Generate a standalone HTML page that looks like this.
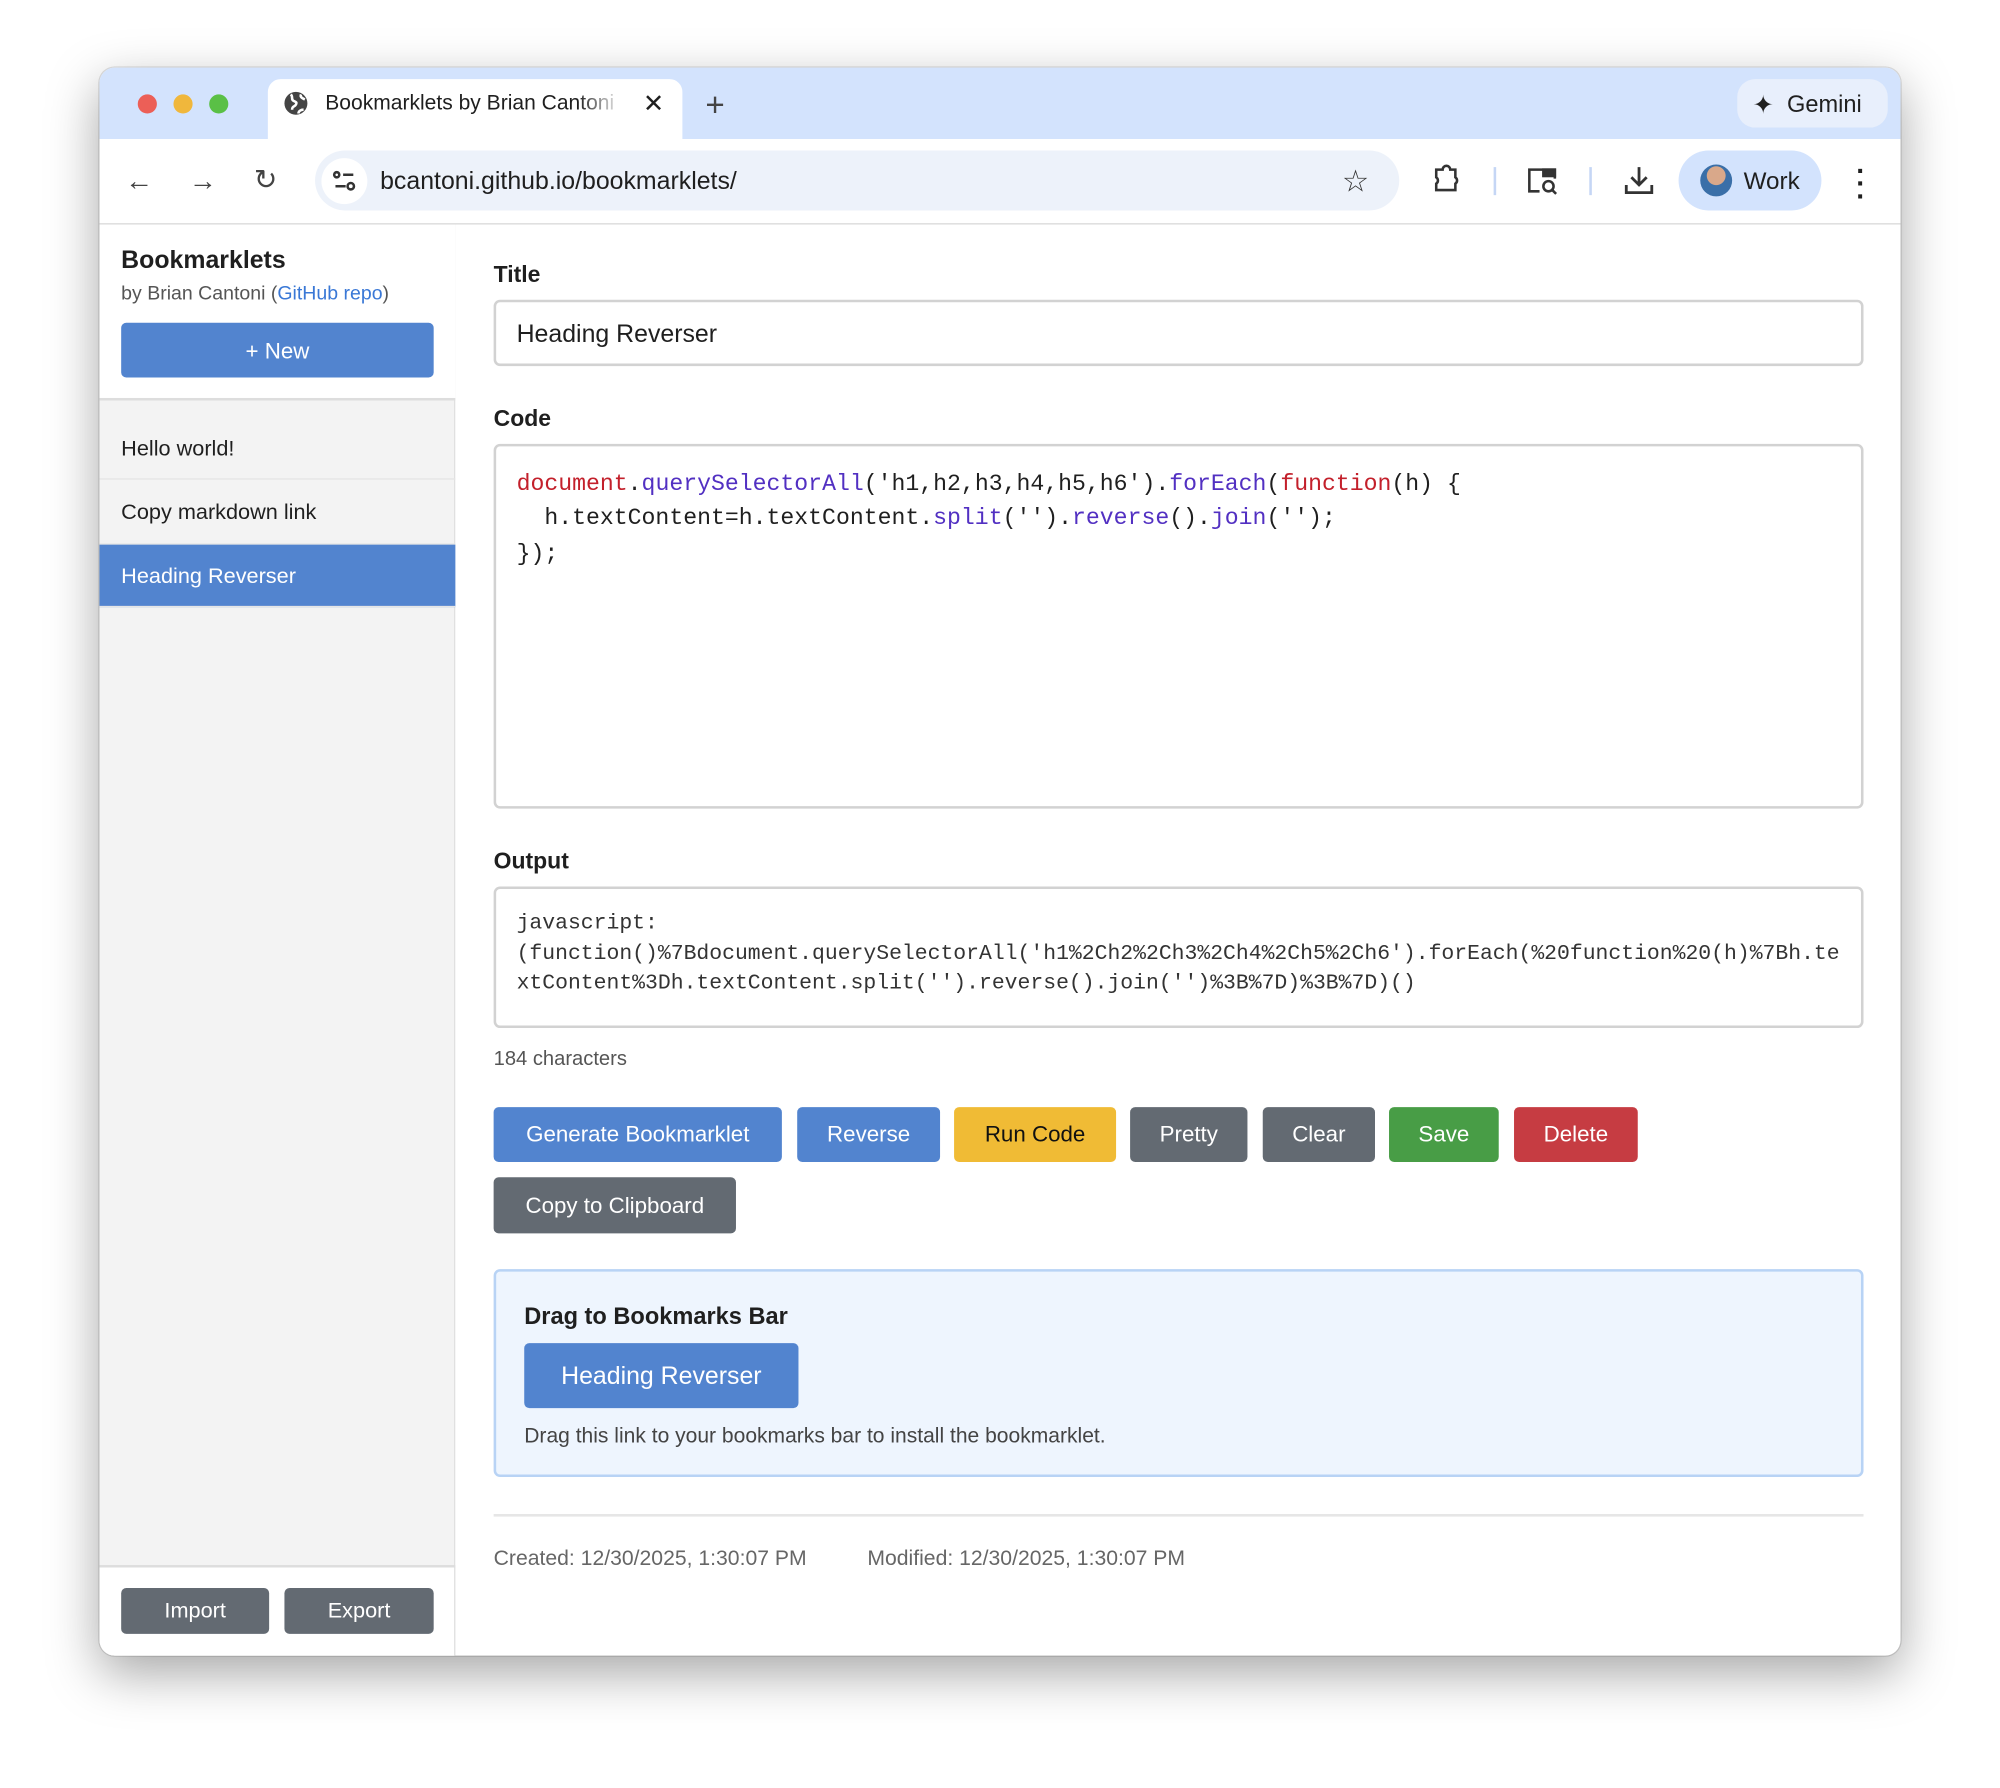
<!DOCTYPE html>
<html><head><meta charset="utf-8"><style>
*{box-sizing:border-box;margin:0;padding:0}
html,body{width:2000px;height:1788px;overflow:hidden;background:#fff}
#s{position:absolute;left:0;top:0;width:1568px;height:1402px;transform:scale(1.27551);transform-origin:0 0;font-family:"Liberation Sans",sans-serif;color:#1f1f1f}
.a{position:absolute}
.win{left:78px;top:53px;width:1412px;height:1245px;border-radius:12px;overflow:hidden;background:#fff;box-shadow:0 14px 40px rgba(0,0,0,.35),0 0 0 1px rgba(0,0,0,.12)}
.dot{width:15px;height:15px;border-radius:50%;top:74px}
.btn{position:absolute;color:#fff;font-size:17.5px;display:flex;align-items:center;justify-content:center;border-radius:4px;height:43px}
.mono{font-family:"Liberation Mono",monospace;white-space:pre}
.lbl{font-weight:bold;font-size:18px;left:387px}
.item{left:78px;width:279px;height:50px;font-size:17px;padding-left:17px;padding-top:2px;display:flex;align-items:center;border-bottom:1px solid #e5e5e5}
</style></head><body><div id="s">
<div class="a win"></div>
<div class="a" style="left:78px;top:53px;width:1412px;height:56px;background:#d3e3fd;border-radius:12px 12px 0 0"></div>
<div class="a dot" style="left:108px;background:#ec5f57"></div>
<div class="a dot" style="left:136px;background:#f0b73c"></div>
<div class="a dot" style="left:164px;background:#5ac046"></div>
<div class="a" style="left:210px;top:62px;width:325px;height:50px;background:#fff;border-radius:10px 10px 0 0"></div>
<svg class="a" style="left:222px;top:71px" width="20" height="20" viewBox="0 0 20 20"><circle cx="10" cy="10" r="9" fill="#444"/><path d="M6 3c2 2 0 4 2 5s3 1 2 3-3 1-3 4M14 3c-1 2 1 3 3 4M12 18c0-2 2-3 4-3" stroke="#fff" stroke-width="2" fill="none"/></svg>
<div class="a" style="left:255px;top:72px;font-size:16.5px;width:233px;overflow:hidden;white-space:nowrap;-webkit-mask-image:linear-gradient(90deg,#000 85%,transparent)">Bookmarklets by Brian Cantoni</div>
<div class="a" style="left:504px;top:69px;font-size:20px">✕</div>
<div class="a" style="left:553px;top:67px;font-size:26px;color:#444">+</div>
<div class="a" style="left:1362px;top:62px;width:118px;height:38px;border-radius:14px;background:#e8effc"></div>
<div class="a" style="left:1374px;top:70px;font-size:20px">✦</div>
<div class="a" style="left:1401px;top:71px;font-size:18.5px">Gemini</div>
<div class="a" style="left:98px;top:129px;font-size:22px;color:#444">←</div>
<div class="a" style="left:148px;top:129px;font-size:22px;color:#444">→</div>
<div class="a" style="left:199px;top:128px;font-size:22px;color:#444">↻</div>
<div class="a" style="left:247px;top:118px;width:850px;height:47px;border-radius:24px;background:#edf2fa"></div>
<div class="a" style="left:252px;top:124px;width:36px;height:36px;border-radius:50%;background:#fff"></div>
<svg class="a" style="left:260px;top:132px" width="20" height="20" viewBox="0 0 20 20" fill="none" stroke="#333" stroke-width="2"><circle cx="4" cy="5" r="2"/><path d="M9 5h8M3 14h8"/><circle cx="15" cy="14" r="2.5"/></svg>
<div class="a" style="left:298px;top:131px;font-size:19.5px">bcantoni.github.io/bookmarklets/</div>
<div class="a" style="left:1052px;top:128px;font-size:24px;color:#333">☆</div>
<svg class="a" style="left:1122px;top:129px" width="24" height="24" viewBox="0 0 24 24" fill="none" stroke="#333" stroke-width="2"><path d="M4 4h5a3 3 0 0 1 6 0h4v6a3 3 0 0 1 0 5v5H4v-5a3 3 0 0 0 0-5z"/></svg>
<div class="a" style="left:1171px;top:131px;width:2px;height:22px;background:#c5d6f5"></div>
<svg class="a" style="left:1197px;top:129px" width="26" height="26" viewBox="0 0 26 26" fill="none" stroke="#333" stroke-width="2"><path d="M10 21H2V4h20v7"/><rect x="13" y="4" width="9" height="5" fill="#333"/><circle cx="17" cy="17" r="4"/><path d="M20 20l3 3"/></svg>
<div class="a" style="left:1246px;top:131px;width:2px;height:22px;background:#c5d6f5"></div>
<svg class="a" style="left:1273px;top:129px" width="24" height="24" viewBox="0 0 24 24" fill="none" stroke="#333" stroke-width="2.2"><path d="M12 2v13M6 10l6 6 6-6M2 16v6h20v-6"/></svg>
<div class="a" style="left:1316px;top:118px;width:112px;height:47px;border-radius:24px;background:#d3e3fd"></div>
<div class="a" style="left:1333px;top:129px;width:25px;height:25px;border-radius:50%;background:radial-gradient(circle at 50% 35%,#d9a88a 35%,#3a6fa8 37%)"></div>
<div class="a" style="left:1367px;top:132px;font-size:19px">Work</div>
<div class="a" style="left:1452px;top:129px;font-size:22px;font-weight:bold;line-height:10px;width:14px;text-align:center">·<br>·<br>·</div>
<div class="a" style="left:78px;top:175px;width:1412px;height:1px;background:#d8d8d8"></div>
<!-- sidebar -->
<div class="a" style="left:78px;top:176px;width:279px;height:1122px;background:#f3f3f3;border-right:1px solid #ddd;border-radius:0 0 0 12px"></div>
<div class="a" style="left:78px;top:176px;width:279px;height:138px;background:#fff;border-bottom:2px solid #ddd"></div>
<div class="a" style="left:95px;top:193px;font-size:19.5px;font-weight:bold">Bookmarklets</div>
<div class="a" style="left:95px;top:222px;font-size:15.3px;color:#555">by Brian Cantoni (<span style="color:#3a78d6">GitHub repo</span>)</div>
<div class="btn" style="left:95px;top:253px;width:245px;background:#5284cf;padding-top:2px">+ New</div>
<div class="a item" style="top:326px">Hello world!</div>
<div class="a item" style="top:376px;height:51px">Copy markdown link</div>
<div class="a item" style="top:427px;height:49px;background:#5284cf;color:#fff">Heading Reverser</div>
<div class="a" style="left:78px;top:1227px;width:279px;height:71px;background:#fff;border-top:2px solid #ddd;border-right:1px solid #ddd;border-radius:0 0 0 12px"></div>
<div class="btn" style="left:95px;top:1245px;width:116px;height:36px;background:#636a72;font-size:17px">Import</div>
<div class="btn" style="left:223px;top:1245px;width:117px;height:36px;background:#636a72;font-size:17px">Export</div>
<!-- main -->
<div class="a lbl" style="top:205px">Title</div>
<div class="a" style="left:387px;top:235px;width:1074px;height:52px;border:2px solid #d2d2d2;border-radius:5px"></div>
<div class="a" style="left:405px;top:251px;font-size:19.5px">Heading Reverser</div>
<div class="a lbl" style="top:318px">Code</div>
<div class="a" style="left:387px;top:348px;width:1074px;height:286px;border:2px solid #d2d2d2;border-radius:5px"></div>
<div class="a mono" style="left:405px;top:367px;font-size:18.15px;line-height:27.3px"><span style="color:#c3202b">document</span>.<span style="color:#5230c2">querySelectorAll</span>('h1,h2,h3,h4,h5,h6').<span style="color:#5230c2">forEach</span>(<span style="color:#c3202b">function</span>(h) {
  h.textContent=h.textContent.<span style="color:#5230c2">split</span>('').<span style="color:#5230c2">reverse</span>().<span style="color:#5230c2">join</span>('');
});</div>
<div class="a lbl" style="top:665px">Output</div>
<div class="a" style="left:387px;top:695px;width:1074px;height:111px;border:2px solid #d2d2d2;border-radius:5px"></div>
<div class="a mono" style="left:405px;top:713px;font-size:16.8px;line-height:23.6px;color:#333">javascript:
(function()%7Bdocument.querySelectorAll('h1%2Ch2%2Ch3%2Ch4%2Ch5%2Ch6').forEach(%20function%20(h)%7Bh.te
xtContent%3Dh.textContent.split('').reverse().join('')%3B%7D)%3B%7D)()</div>
<div class="a" style="left:387px;top:822px;font-size:15.8px;color:#555">184 characters</div>
<div class="btn" style="left:387px;top:868px;width:226px;background:#5284cf">Generate Bookmarklet</div>
<div class="btn" style="left:625px;top:868px;width:112px;background:#5284cf">Reverse</div>
<div class="btn" style="left:748px;top:868px;width:127px;background:#f0bb35;color:#111">Run Code</div>
<div class="btn" style="left:886px;top:868px;width:92px;background:#636a72">Pretty</div>
<div class="btn" style="left:990px;top:868px;width:88px;background:#636a72">Clear</div>
<div class="btn" style="left:1089px;top:868px;width:86px;background:#489d46">Save</div>
<div class="btn" style="left:1187px;top:868px;width:97px;background:#c63c42">Delete</div>
<div class="btn" style="left:387px;top:923px;width:190px;height:44px;background:#636a72">Copy to Clipboard</div>
<div class="a" style="left:387px;top:995px;width:1074px;height:163px;background:#eef5fe;border:2px solid #b8d3f5;border-radius:5px"></div>
<div class="a" style="left:411px;top:1021px;font-size:18.5px;font-weight:bold">Drag to Bookmarks Bar</div>
<div class="btn" style="left:411px;top:1053px;width:215px;height:51px;background:#5284cf;font-size:19.5px;padding-top:2px">Heading Reverser</div>
<div class="a" style="left:411px;top:1117px;font-size:16.5px;color:#444">Drag this link to your bookmarks bar to install the bookmarklet.</div>
<div class="a" style="left:387px;top:1187px;width:1074px;height:2px;background:#e6e6e6"></div>
<div class="a" style="left:387px;top:1212px;font-size:16.6px;color:#666">Created: 12/30/2025, 1:30:07 PM</div>
<div class="a" style="left:680px;top:1212px;font-size:16.6px;color:#666">Modified: 12/30/2025, 1:30:07 PM</div>
</div></body></html>
